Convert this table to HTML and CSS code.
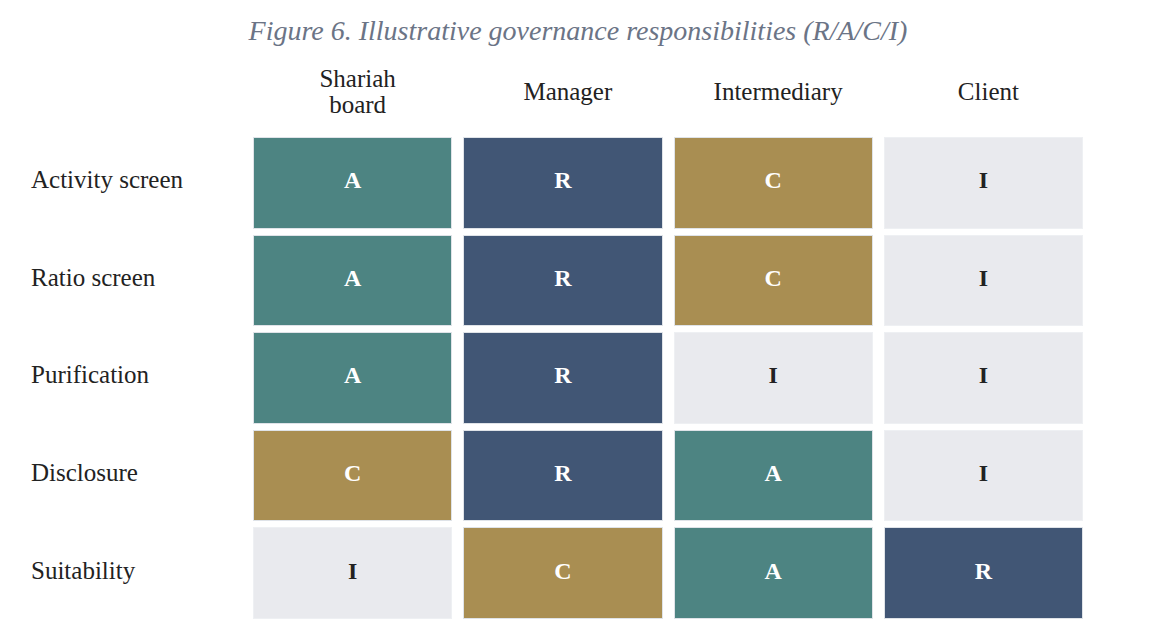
FILE: index.html
```html
<!DOCTYPE html>
<html lang="en">
<head>
<meta charset="utf-8">
<title>Figure 6</title>
<link rel="stylesheet" href="styles.css">
</head>
<body>
<div class="page">
  <div class="title">Figure 6. Illustrative governance responsibilities (R/A/C/I)</div>
  <div class="head">
    <div></div>
    <div class="colhead">Shariah<br>board</div>
    <div class="colhead">Manager</div>
    <div class="colhead">Intermediary</div>
    <div class="colhead">Client</div>
  </div>
  <div class="matrix">
    <div class="label">Activity screen</div>
    <div class="cell a">A</div>
    <div class="cell r">R</div>
    <div class="cell c">C</div>
    <div class="cell i">I</div>

    <div class="label">Ratio screen</div>
    <div class="cell a">A</div>
    <div class="cell r">R</div>
    <div class="cell c">C</div>
    <div class="cell i">I</div>

    <div class="label">Purification</div>
    <div class="cell a">A</div>
    <div class="cell r">R</div>
    <div class="cell i">I</div>
    <div class="cell i">I</div>

    <div class="label">Disclosure</div>
    <div class="cell c">C</div>
    <div class="cell r">R</div>
    <div class="cell a">A</div>
    <div class="cell i">I</div>

    <div class="label">Suitability</div>
    <div class="cell i">I</div>
    <div class="cell c">C</div>
    <div class="cell a">A</div>
    <div class="cell r">R</div>
  </div>
</div>
</body>
</html>
```
FILE: styles.css
```css
html, body {
  margin: 0;
  padding: 0;
  background: #ffffff;
}
body {
  font-family: "Liberation Serif", "Times New Roman", serif;
  color: #222222;
}
.page {
  width: 1156px;
}
.title {
  padding-top: 15px;
  line-height: 31px;
  font-size: 28px;
  font-style: italic;
  color: #6b7486;
  text-align: center;
}
.head {
  display: grid;
  grid-template-columns: 242px repeat(4, 199.25px);
  column-gap: 11px;
  height: 91px;
  align-items: center;
}
.colhead {
  text-align: center;
  font-size: 25px;
  line-height: 26px;
  padding-left: 10px;
  color: #222222;
}
.matrix {
  display: grid;
  grid-template-columns: 242px repeat(4, 199.25px);
  grid-template-rows: repeat(5, 91.6px);
  column-gap: 11px;
  row-gap: 6px;
}
.label {
  display: flex;
  align-items: center;
  padding-left: 31px;
  padding-bottom: 5px;
  font-size: 25px;
  color: #222222;
}
.cell {
  box-sizing: border-box;
  display: flex;
  align-items: center;
  justify-content: center;
  border: 1px solid #dfe3e8;
  font-weight: bold;
  font-size: 24px;
  padding-bottom: 4px;
}
.a { background: #4d8482; color: #ffffff; }
.r { background: #415675; color: #ffffff; }
.c { background: #a98e52; color: #ffffff; }
.i { background: #e9eaee; color: #222222; border-color: #eef0f3; }
```
